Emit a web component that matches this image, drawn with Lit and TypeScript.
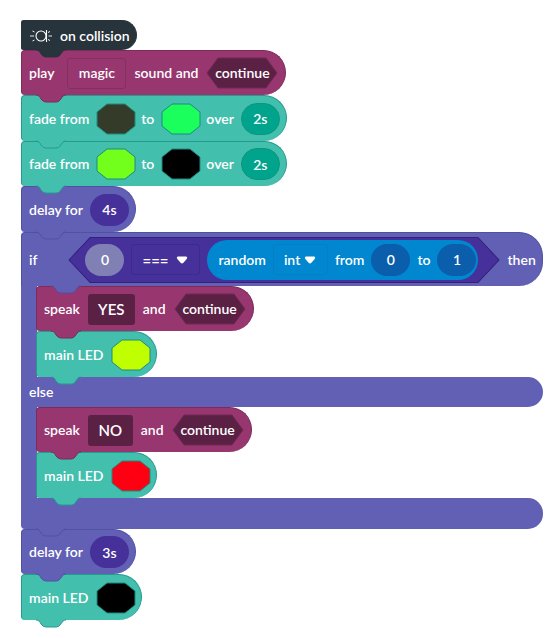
import { LitElement, html, css } from "lit";
import { customElement } from "lit/decorators.js";

const label = (text: string) => html`<span class="label">${text}</span>`;

const pill = (value: string, name: string, tone: string) =>
  html`<input class="pill ${tone}" type="text" .value=${value} aria-label=${name} />`;

const octagon = (color: string, name: string) => html`
  <button class="swatch" aria-label=${name}>
    <svg width="40" height="32" viewBox="0 0 40 32">
      <path d="M11 1H29L39 9V23L29 31H11L1 23V9Z" fill=${color} stroke="#23897f" stroke-width="1" />
    </svg>
  </button>
`;

const hexagon = (text: string) => html`
  <button class="choice">
    <svg width="72" height="32" viewBox="0 0 72 32" aria-hidden="true">
      <path d="M12 1H60L71 16L60 31H12L1 16Z" fill="#5b2145" stroke="#6f2852" />
    </svg>
    <span>${text}</span>
  </button>
`;

const dropdown = (value: string, name: string, cls: string) => html`
  <span class="dropdown ${cls}">
    <select aria-label=${name}><option>${value}</option></select>
    <svg width="12" height="8" viewBox="0 0 12 8" aria-hidden="true">
      <path d="M2.2 .6H9.8Q12 1 10.7 3L7.4 6.8Q6 8 4.6 6.8L1.3 3Q0 1 2.2 .6Z" fill="#fff" />
    </svg>
  </span>
`;

const tab = (tone: string) => html`
  <svg class="tab ${tone}" width="30" height="9" viewBox="0 0 30 9" aria-hidden="true">
    <path class="fill" d="M0 0C3 1 4 3 5 5Q7 8 10 8H20Q23 8 24 6L27 2Q28 1 30 0Z" />
    <path class="line" d="M0 1C3 1 4 3 5 5Q7 8 10 8H20Q23 8 24 6L27 2Q28 1 30 1" />
  </svg>
`;

const block = (tone: string, content: unknown, size = "") => html`
  <div class="block ${tone} ${size}">${content}${tab(tone)}</div>
`;

const speak = (text: string, cls: string) => block("magenta", html`
  ${label("speak")}
  <input class="text ${cls}" type="text" .value=${text} aria-label="Text to speak" />
  ${label("and")}${hexagon("continue")}
`, "roomy");

const fade = (from: string, to: string, size: string) => block("teal", html`
  ${label("fade from")}${octagon(from, "From color")}${label("to")}
  ${octagon(to, "To color")}${label("over")}${pill("2s", "Duration", "green")}
`, size);

const led = (color: string) => block("teal", html`
  ${label("main LED")}${octagon(color, "LED color")}
`, "tall roomy");

const delay = (time: string, size: string) => block("violet", html`
  ${label("delay for")}${pill(time, "Delay", "indigo")}
`, size);

const collisionIcon = html`
  <svg width="24" height="14" viewBox="0 0 24 14" fill="none" stroke="#fff" aria-hidden="true">
    <circle cx="12" cy="7" r="5" stroke-width="1.1" />
    <path d="M17.500 1V13" stroke-width="1.1" />
    <path d="M5.500 3L3.500 2M5 7H1M5.500 11L3.500 12M19 3.500L21 2.500M19.500 7H23M19 10.500L21 11.500" stroke-width=".9" />
  </svg>
`;

@customElement("app-root")
export class AppRoot extends LitElement {
  static styles = css`
    :host {
      display: block;
      min-height: 100vh;
      box-sizing: border-box;
      padding: 20px 11px 10px 21px;
      background: #fff;
      color: #fff;
      font: 600 14px/20px Lato, "Liberation Sans", sans-serif;
    }
    * { box-sizing: border-box; }
    .stack {
      display: flex;
      flex-direction: column;
      align-items: flex-start;
    }
    .magenta { --fill: #98366f; --line: #7b2b5c; }
    .teal { --fill: #43bfae; --line: #279a90; }
    .violet { --fill: #6160b4; --line: #5050a4; }
    .dark { --fill: #28343c; --line: #28343c; }
    .block {
      position: relative;
      display: flex;
      align-items: center;
      gap: 7px;
      height: 45px;
      padding: 0 6px 0 7px;
      background: var(--fill);
      border: 1px solid var(--line);
      border-bottom: 0;
      border-radius: 4px 23px 23px 4px;
      white-space: nowrap;
    }
    .tall { height: 46px; }
    .roomy { gap: 8px; padding-right: 7px; }
    .header { height: 30px; }
    .tab {
      position: absolute;
      z-index: 1;
      left: 14px;
      bottom: -8px;
      display: block;
    }
    .fill { fill: var(--fill); }
    .line { fill: none; stroke: var(--line); }
    input, button, select {
      margin: 0;
      padding: 0;
      border: 0;
      background: none;
      color: inherit;
      font: inherit;
      text-align: center;
    }
    .pill {
      width: 39px;
      height: 32px;
      border-radius: 16px;
    }
    .green { background: #00a48c; border: 1px solid #14937f; }
    .indigo { background: #46309a; }
    .muted { background: #8080b4; }
    .navy { background: #0b5eab; }
    .swatch { width: 38px; height: 32px; display: grid; place-items: center; }
    .choice { display: grid; place-items: center; height: 32px; }
    .choice > * { grid-area: 1 / 1; }
    .sound {
      width: 59px;
      height: 31px;
      margin-left: 5px;
      border: 1px solid #84305f;
      border-radius: 3px;
    }
    .text {
      height: 31px;
      border-radius: 3px;
      background: #5b2145;
      font-size: 15px;
    }
    .yes { width: 47px; }
    .no { width: 45px; }
    .dropdown {
      display: flex;
      align-items: center;
      justify-content: space-between;
      height: 31px;
      padding: 0 11px 0 10px;
      border: 1px solid #3d2a8c;
      border-radius: 3px;
    }
    .dropdown select { appearance: none; text-align: left; }
    .operator { width: 69px; font-size: 15px; }
    .kind { width: 55px; border-color: #0280c6; }
    .loop { width: fit-content; }
    .condition {
      height: 54px;
      border-radius: 4px 24px 24px 0;
    }
    .compare {
      display: grid;
      margin-left: 24px;
    }
    .compare > * { grid-area: 1 / 1; }
    .compare > svg { width: 100%; height: 46px; }
    .compare-row {
      display: flex;
      align-items: center;
      gap: 7px;
      padding: 0 22px 0 17px;
    }
    .random {
      display: flex;
      align-items: center;
      gap: 7px;
      height: 40px;
      padding: 0 2px 0 11px;
      border-radius: 20px;
      background: #0087cf;
    }
    .arm {
      padding-left: 15px;
      background: linear-gradient(#6160b4, #6160b4) left / 16px 100% no-repeat;
    }
    .bar {
      display: flex;
      align-items: center;
      height: 30px;
      padding-left: 8px;
      border-radius: 0 15px 15px 0;
      background: #6160b4;
    }
    .bar.violet > .label { position: relative; }
    .foot { position: relative; height: 31px; border-bottom-left-radius: 4px; }
    .foot .tab { left: 15px; }
    .condition > .tab { left: 29px; }
  `;

  render() {
    return html`
      <main class="stack">
        <div class="block dark header">
          ${collisionIcon}${label("on collision")}${tab("dark")}
        </div>
        ${block("magenta", html`
          ${label("play")}
          <button class="sound">magic</button>
          ${label("sound and")}${hexagon("continue")}
        `, "roomy")}
        ${fade("#353b29", "#1bff5c", "tall")}
        ${fade("#71ff1b", "#000000", "")}
        ${delay("4s", "tall")}
        <section class="loop">
          <div class="block violet condition">
            ${label("if")}
            <div class="compare">
              <svg viewBox="0 0 430 46" preserveAspectRatio="none" aria-hidden="true">
                <path d="M22 .5H408L429 23L408 45.500H22L1 23Z" fill="#46309a" stroke="#33217a" />
              </svg>
              <div class="compare-row">
                ${pill("0", "Left value", "muted")}
                ${dropdown("===", "Comparison", "operator")}
                <div class="random">
                  ${label("random")}${dropdown("int", "Number type", "kind")}
                  ${label("from")}${pill("0", "Minimum", "navy")}
                  ${label("to")}${pill("1", "Maximum", "navy")}
                </div>
              </div>
            </div>
            ${label("then")}${tab("violet")}
          </div>
          <div class="arm stack">${speak("YES", "yes")}${led("#bfff00")}</div>
          <div class="bar violet">${label("else")}${""}</div>
          <div class="arm stack">${speak("NO", "no")}${led("#ff0012")}</div>
          <div class="bar foot violet">${tab("violet")}</div>
        </section>
        ${delay("3s", "")}
        ${led("#000000")}
      </main>
    `;
  }
}
